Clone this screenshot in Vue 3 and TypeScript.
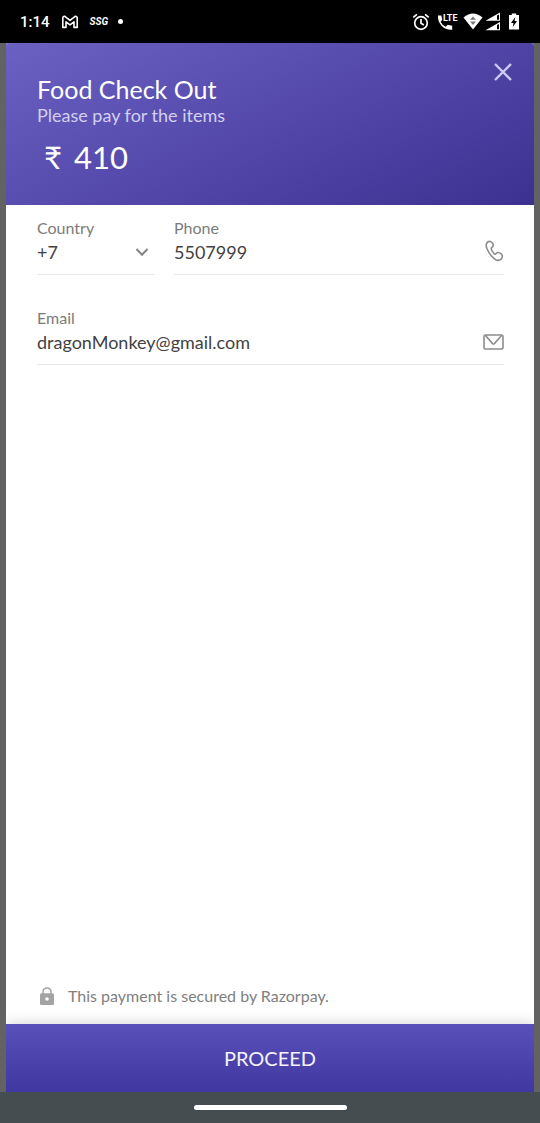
<script setup lang="ts">
import { ref } from 'vue'

const country = ref<string>('+7')
const phone = ref<string>('5507999')
const email = ref<string>('dragonMonkey@gmail.com')
const amount = ref<number>(410)
</script>

<template>
  <div class="screen">
    <div class="status">
      <div class="status-group">
        <span class="clock">1:14</span>
        <svg class="gmail" viewBox="0 0 18 14" width="18" height="14">
          <path d="M1.8 12.4V2.8Q2 1 3.8 1.4L9 5.4L14.2 1.4Q16 1 16.2 2.8V12.4H13V6.8L9 9.8L5 6.8V12.4Z" fill="none" stroke="#fff" stroke-width="1.6" stroke-linejoin="round" />
        </svg>
        <span class="ssg">SSG</span>
        <span class="dot"></span>
      </div>
      <div class="status-group">
        <svg class="alarm" viewBox="0 0 18 18" width="18" height="18">
          <g fill="none" stroke="#fff" stroke-width="1.7">
            <circle cx="9" cy="10" r="6.3" />
            <path d="M9 6V10.3L11.8 12M1.3 4.4L4.9 1.4M16.7 4.4L13.1 1.4" />
          </g>
        </svg>
        <svg class="call" viewBox="0 0 22 18" width="22" height="18">
          <path d="M1 2.5H4.4L5.2 6.9L3.6 8.7C4.8 11 6.4 12.6 8.8 13.7L10.7 11.7L15.2 12.7V16.8C7.5 17.6 .4 11 1 2.5Z" fill="#fff" />
          <text x="6" y="8" class="lte">LTE</text>
        </svg>
        <svg class="wifi" viewBox="0 0 20 17" width="20" height="17">
          <path d="M.5 4.5Q10 -3.5 19.5 4.5L10 16.5Z" fill="#fff" />
          <path d="M7 6.8L10 3.4L13 6.8ZM7 8.6H13L10 12Z" fill="#777" />
        </svg>
        <svg class="signal" viewBox="0 0 16 19" width="16" height="19">
          <path d="M.5 8.8L15 .5V8.8ZM.5 18.3L15 10V18.3Z" fill="#fff" />
          <path d="M12 3.6L14 2.6V7.8H12ZM12 13.1L14 12.1V17.3H12Z" fill="#000" />
        </svg>
        <svg class="battery" viewBox="0 0 10 17" width="10" height="17">
          <path d="M0 2H2.8V.5H7.2V2H10V16.5H0Z" fill="#fff" />
          <path d="M6.3 4L2 10H4.5L3.8 14L8 8H5.5Z" fill="#000" />
        </svg>
      </div>
    </div>

    <main class="sheet">
      <header class="summary">
        <button class="close" type="button" aria-label="Close">
          <svg viewBox="0 0 18 18" width="18" height="18">
            <path d="M1 1L17 17M17 1L1 17" stroke="#cdc9ee" stroke-width="2.4" fill="none" />
          </svg>
        </button>
        <h1>Food Check Out</h1>
        <p class="subtitle">Please pay for the items</p>
        <p class="amount"><span>₹</span><span>{{ amount }}</span></p>
      </header>

      <form id="contact" class="fields" @submit.prevent>
        <div class="row">
          <div class="field country">
            <label for="country">Country</label>
            <div class="control">
              <select id="country" v-model="country">
                <option value="+7">+7</option>
              </select>
              <svg class="chevron" viewBox="0 0 14 10" width="14" height="10">
                <path d="M1.5 2L7 7.8L12.5 2" fill="none" stroke="#858585" stroke-width="2" />
              </svg>
            </div>
          </div>
          <div class="field phone">
            <label for="phone">Phone</label>
            <div class="control">
              <input id="phone" v-model="phone" type="tel" />
              <svg class="handset" viewBox="0 0 20 24" width="20" height="24">
                <path d="M3.8 2C5.3.9 7.3 1.4 8.5 3.2C9.6 5 9.4 6.4 8 7.4C7 8.1 7 9 7.8 10.4L9.6 13.1C10.4 14.3 11.2 14.5 12.2 13.5C13.5 12.2 15.5 12.4 17.2 13.9C18.8 15.3 18.8 17.3 17.3 18.9C15.3 20.9 12.6 20.8 10.2 18.7C7.4 16.2 4.8 12.8 3.1 9C1.7 5.9 2 3.3 3.8 2Z" fill="none" stroke="#8c8c8c" stroke-width="1.6" />
              </svg>
            </div>
          </div>
        </div>
        <div class="field">
          <label for="email">Email</label>
          <div class="control">
            <input id="email" v-model="email" type="email" />
            <svg class="envelope" viewBox="0 0 21 16" width="21" height="16">
              <rect x="1" y="1" width="19" height="14" rx="1.5" fill="none" stroke="#8c8c8c" stroke-width="1.6" />
              <path d="M2.5 1.5L9.6 9.6Q10.5 10.4 11.4 9.6L18.5 1.5" fill="none" stroke="#8c8c8c" stroke-width="1.6" />
            </svg>
          </div>
        </div>
      </form>

      <p class="secure">
        <svg viewBox="0 0 14 18" width="14" height="18">
          <path d="M3 7V4.8C3 2.4 4.7 1 7 1S11 2.4 11 4.8V7" fill="none" stroke="#a3a3a3" stroke-width="1.5" />
          <rect y="6.3" width="14" height="11.7" rx="1.5" fill="#a3a3a3" />
          <circle cx="7" cy="12" r="1.8" fill="#fff" />
        </svg>
        <span>This payment is secured by Razorpay.</span>
      </p>

      <button class="proceed" type="submit" form="contact">PROCEED</button>
    </main>

    <div class="navbar"><span class="handle"></span></div>
  </div>
</template>

<style>
body {
  margin: 0;
}
</style>

<style scoped>
.screen {
  display: flex;
  flex-direction: column;
  min-height: 100vh;
  background: #626262;
  font-family: Lato, "Liberation Sans", sans-serif;
}

.status {
  display: flex;
  justify-content: space-between;
  align-items: center;
  box-sizing: border-box;
  height: 43px;
  padding: 0 21px 0 20px;
  background: #000;
  color: #fff;
}

.status-group {
  display: flex;
  align-items: center;
}

.clock {
  margin-right: 11px;
  font: 500 15px/20px Roboto, sans-serif;
}

.gmail {
  margin-right: 11px;
}

.ssg {
  margin-right: 10px;
  font: italic 700 10px/20px Roboto, sans-serif;
}

.dot {
  width: 5px;
  height: 5px;
  border-radius: 50%;
  background: #fff;
}

.alarm {
  margin-right: 7px;
}

.call {
  margin-right: 4px;
}

.lte {
  font: 700 9px Roboto, sans-serif;
  fill: #fff;
}

.wifi {
  margin-right: 2px;
}

.signal {
  margin-right: 8px;
}

.sheet {
  display: flex;
  flex: 1;
  flex-direction: column;
  margin: 0 6px;
  border-radius: 3px 3px 0 0;
  background: #fff;
}

.summary {
  position: relative;
  padding: 31px 31px 28px;
  border-radius: 3px 3px 0 0;
  background: linear-gradient(155deg, #6a61c3 0%, #5449ab 50%, #3c3191 100%);
  color: #fff;
}

.close {
  position: absolute;
  top: 16px;
  right: 18px;
  display: flex;
  padding: 4px;
  border: 0;
  background: none;
}

h1 {
  margin: 0;
  font-size: 25px;
  font-weight: 400;
  line-height: 30px;
}

.subtitle {
  margin: 0;
  color: #d3cff0;
  font-size: 18px;
  line-height: 22px;
}

.amount {
  display: flex;
  gap: 12px;
  margin: 11px 0 0 7px;
  font-size: 31px;
  line-height: 40px;
}

.fields {
  display: flex;
  flex: 1;
  flex-direction: column;
  gap: 33px;
  padding: 13px 30px 0 31px;
}

.row {
  display: flex;
  gap: 19px;
}

.field {
  border-bottom: 1px solid #e8e8e8;
}

.country {
  flex: 0 0 118px;
}

.phone {
  flex: 1;
}

label {
  display: block;
  color: #7b7b7b;
  font-size: 16px;
  line-height: 20px;
}

.control {
  display: flex;
  align-items: center;
  height: 24px;
  margin: 2px 0 10px;
}

input,
select {
  flex: 1;
  width: 0;
  height: 24px;
  padding: 0;
  border: 0;
  outline: 0;
  appearance: none;
  background: none;
  color: #424242;
  font: 18px/24px Lato, "Liberation Sans", sans-serif;
}

.chevron {
  margin-right: 6px;
}

.secure {
  display: flex;
  align-items: center;
  gap: 14px;
  margin: 0;
  padding: 0 34px 16px;
  color: #808080;
  font-size: 16px;
  line-height: 24px;
}

.proceed {
  height: 68px;
  padding: 0;
  border: 0;
  background: linear-gradient(#5950b9, #4137a0);
  box-shadow: 0 -2px 12px rgba(0, 0, 0, 0.14);
  clip-path: inset(-16px 0 0);
  color: #f4f3ff;
  font: 20px/24px Lato, "Liberation Sans", sans-serif;
}

.navbar {
  display: flex;
  justify-content: center;
  align-items: center;
  height: 31px;
  background: #454d51;
}

.handle {
  width: 153px;
  height: 5px;
  border-radius: 3px;
  background: #fff;
}
</style>
